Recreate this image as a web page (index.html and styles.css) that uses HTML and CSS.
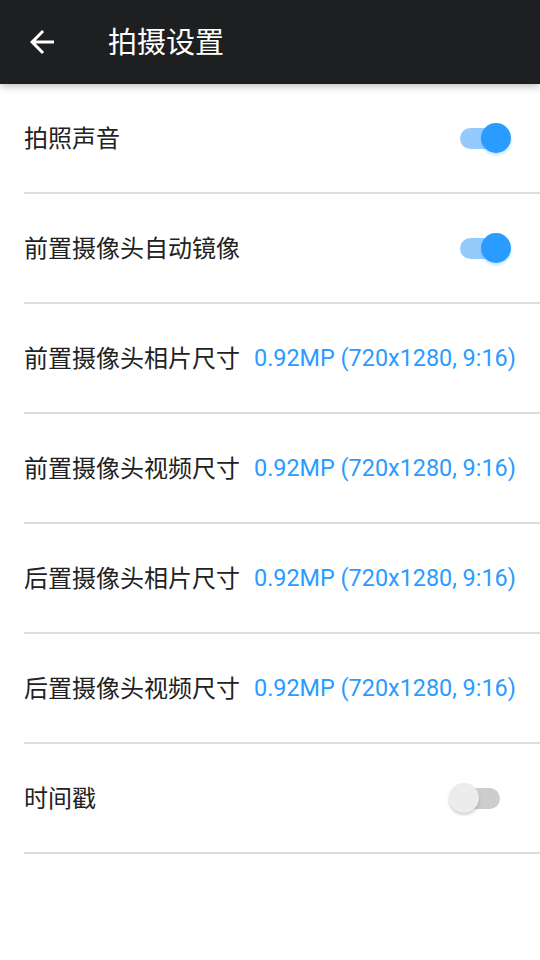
FILE: index.html
```html
<!DOCTYPE html>
<html lang="zh">
<head>
<meta charset="utf-8">
<link rel="stylesheet" href="styles.css">
</head>
<body>
<header class="appbar">
  <svg class="back" viewBox="0 0 24 24" width="36" height="36"><path fill="#fff" d="M20 11H7.83l5.59-5.59L12 4l-8 8 8 8 1.41-1.41L7.83 13H20v-2z"/></svg>
  <h1 class="title">拍摄设置</h1>
</header>
<main class="list">
  <div class="row"><span class="label">拍照声音</span><span class="switch on"><span class="track"></span><span class="thumb"></span></span></div>
  <div class="row"><span class="label">前置摄像头自动镜像</span><span class="switch on"><span class="track"></span><span class="thumb"></span></span></div>
  <div class="row"><span class="label">前置摄像头相片尺寸</span><span class="value">0.92MP (720x1280, 9:16)</span></div>
  <div class="row"><span class="label">前置摄像头视频尺寸</span><span class="value">0.92MP (720x1280, 9:16)</span></div>
  <div class="row"><span class="label">后置摄像头相片尺寸</span><span class="value">0.92MP (720x1280, 9:16)</span></div>
  <div class="row"><span class="label">后置摄像头视频尺寸</span><span class="value">0.92MP (720x1280, 9:16)</span></div>
  <div class="row"><span class="label">时间戳</span><span class="switch off"><span class="track"></span><span class="thumb"></span></span></div>
</main>
</body>
</html>
```
FILE: styles.css
```css
* { box-sizing: border-box; }
html, body { margin: 0; padding: 0; background: #fff; }
body {
  width: 540px;
  height: 960px;
  overflow: hidden;
  font-family: Roboto, "Noto Sans CJK SC", sans-serif;
}
.appbar {
  height: 84px;
  background: #1e1f21;
  display: flex;
  align-items: center;
  padding-left: 24px;
  box-shadow: 0 2px 8px rgba(0,0,0,0.28);
  position: relative;
  z-index: 1;
}
.back { display: block; flex: none; }
.title {
  margin: 0 0 4px 48px;
  color: #fff;
  font-family: "Noto Sans CJK SC", sans-serif;
  font-weight: 400;
  font-size: 29px;
  line-height: 1;
}
.list { padding-left: 24px; }
.row {
  height: 110px;
  border-bottom: 2px solid #dedede;
  display: flex;
  align-items: center;
}
.label {
  font-family: "Noto Sans CJK SC", sans-serif;
  font-size: 24px;
  line-height: 1.4;
  color: #222;
  flex: none;
  margin-bottom: 3px;
}
.value {
  margin-left: 14px;
  font-family: Roboto, sans-serif;
  font-size: 23.4px;
  color: #2a9bff;
  white-space: nowrap;
}
.switch {
  position: relative;
  margin-left: auto;
  width: 51px;
  height: 30px;
  flex: none;
}
.switch.on { margin-right: 29px; }
.switch.off { margin-right: 40px; }
.track {
  position: absolute;
  left: 0;
  right: 0;
  top: 4.5px;
  height: 21px;
  border-radius: 11px;
}
.thumb {
  position: absolute;
  top: 0;
  width: 30px;
  height: 30px;
  border-radius: 50%;
  box-shadow: 0 2px 3px rgba(0,0,0,0.2);
}
.on .track { background: #95cbfc; }
.on .thumb { right: 0; background: #2a9bff; box-shadow: 0 2px 3px rgba(42,155,255,0.3); }
.off .track { background: #cdcdcd; left: 3px; }
.off .thumb { left: 0; background: #ececec; }
```
